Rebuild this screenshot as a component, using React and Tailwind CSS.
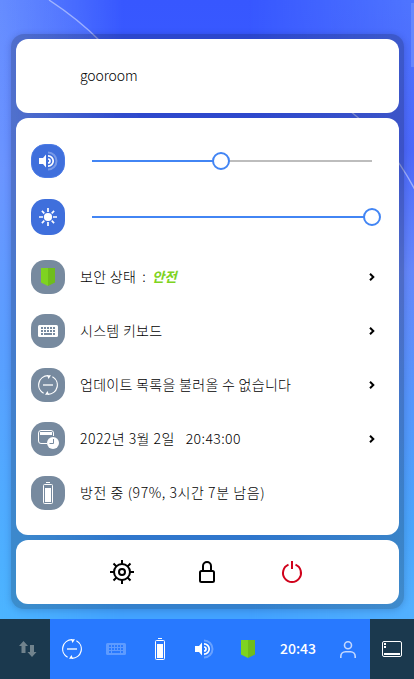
import React from "react";

const FONT = "font-['Noto_Sans_CJK_KR','Noto_Sans',sans-serif]";

function Wallpaper() {
  return (
    <svg className="absolute inset-0" width="414" height="679" viewBox="0 0 414 679" aria-hidden="true">
      <defs>
        <linearGradient id="base" x1="0" y1="0" x2="0" y2="1">
          <stop offset="0" stopColor="#3757ff" />
          <stop offset="0.2" stopColor="#3a5cff" />
          <stop offset="0.8" stopColor="#3b95ff" />
          <stop offset="0.9" stopColor="#42a2ff" />
        </linearGradient>
        <linearGradient id="left" x1="0" y1="0" x2="0" y2="1">
          <stop offset="0" stopColor="#6189ff" />
          <stop offset="0.25" stopColor="#6c96ff" />
          <stop offset="0.5" stopColor="#5b9fff" />
          <stop offset="0.75" stopColor="#50acff" />
          <stop offset="0.9" stopColor="#4cb4ff" />
        </linearGradient>
        <linearGradient id="right" x1="0" y1="0" x2="0" y2="1">
          <stop offset="0" stopColor="#4f75ff" />
          <stop offset="0.22" stopColor="#4c68fa" />
          <stop offset="0.4" stopColor="#6688fb" />
          <stop offset="0.6" stopColor="#5597fc" />
          <stop offset="0.78" stopColor="#4aa5fb" />
          <stop offset="0.9" stopColor="#52b0ff" />
        </linearGradient>
        <linearGradient id="corner" x1="0" y1="0" x2="0" y2="1">
          <stop offset="0" stopColor="#7fa0ff" stopOpacity="0.16" />
          <stop offset="0.3" stopColor="#7fa0ff" stopOpacity="0.16" />
          <stop offset="1" stopColor="#7fa0ff" stopOpacity="0" />
        </linearGradient>
        <linearGradient id="fadeL">
          <stop offset="0" stopColor="#fff" />
          <stop offset="0.3" stopColor="#000" />
        </linearGradient>
        <linearGradient id="fadeR">
          <stop offset="0.6" stopColor="#000" />
          <stop offset="1" stopColor="#fff" />
        </linearGradient>
        <mask id="mL"><rect width="414" height="679" fill="url(#fadeL)" /></mask>
        <mask id="mR"><rect width="414" height="679" fill="url(#fadeR)" /></mask>
      </defs>
      <rect width="414" height="679" fill="url(#base)" />
      <rect width="414" height="679" fill="url(#left)" mask="url(#mL)" />
      <rect width="414" height="679" fill="url(#right)" mask="url(#mR)" />
      <path d="M0 0H49Q78 19 100 41L150 140H0z" fill="url(#corner)" />
      <path d="M49 0Q78 19 100 41" fill="none" stroke="#fff" strokeOpacity="0.45" strokeWidth="1.4" />
      <path d="M350 111Q390 142 415 190" fill="none" stroke="#fff" strokeOpacity="0.45" strokeWidth="1.4" />
      <rect x="411" y="3" width="3" height="64" fill="#6f92ff" fillOpacity="0.7" />
    </svg>
  );
}

function Speaker() {
  return (
    <svg width="20" height="20" viewBox="0 0 20 20" fill="none">
      <path d="M1 7h4l3-3.5v13L5 13H1z" fill="#fff" />
      <path d="M10 1.5a8.5 8.5 0 0 1 0 17" stroke="#fff" strokeOpacity="0.3" strokeWidth="2" />
      <path d="M10 4.8a5.2 5.2 0 0 1 0 10.4M10 8a2 2 0 0 1 0 4" stroke="#fff" strokeWidth="1.7" />
    </svg>
  );
}

function Sun() {
  return (
    <svg width="20" height="20" viewBox="0 0 20 20">
      <circle cx="10" cy="10" r="4.1" fill="#fff" />
      <path d="M10 1v4M10 15v4M1 10h4M15 10h4M3.9 3.9l2.4 2.4M13.7 13.7l2.4 2.4M3.9 16.1l2.4-2.4M13.7 6.3l2.4-2.4" stroke="#fff" strokeWidth="1.7" />
    </svg>
  );
}

function Shield() {
  return (
    <svg width="14" height="18" viewBox="0 0 14 18">
      <path d="M0 0h7v18l-7-3.5z" fill="#7ed321" />
      <path d="M7 0h7v14.5L7 18z" fill="#6fbd1c" />
    </svg>
  );
}

function Keyboard({ hole }) {
  const cells = [];
  for (const y of [2, 5]) for (const x of [3, 6, 9, 12, 15]) cells.push([x, y, 2]);
  cells.push([3, 8, 2], [6, 8, 8], [15, 8, 2]);
  return (
    <svg width="20" height="12" viewBox="0 0 20 12">
      <rect width="20" height="12" rx="1.5" fill="#fff" />
      {cells.map(([x, y, w]) => (
        <rect key={x + "-" + y} x={x} y={y} width={w} height="2" fill={hole} />
      ))}
    </svg>
  );
}

function Update() {
  return (
    <svg width="20" height="20" viewBox="0 0 20 20" fill="none">
      <path d="M5.6 18.2A9.3 9.3 0 0 1 10 .7M14.4 1.8A9.3 9.3 0 0 1 10 19.3" stroke="#fff" strokeWidth="1.2" />
      <path d="M9 .2h4L10.500 4zM11 19.800H7L9.500 16z" fill="#fff" />
      <path d="M5 10h10" stroke="#fff" strokeWidth="1.3" />
    </svg>
  );
}

function CalendarClock() {
  return (
    <svg className="overflow-visible" width="20" height="18" viewBox="0 0 20 18" fill="none">
      <path d="M9 13.5H3A2.500 2.500 0 0 1 .5 11V3A2.500 2.500 0 0 1 3 .5h10A2.500 2.500 0 0 1 15.500 3v3" stroke="#fff" />
      <path d="M2 2h12v3H2z" fill="#fff" />
      <circle cx="15" cy="13" r="6" fill="#fff" />
      <path d="M15.500 9v4.500H11.500" stroke="#778a9f" />
    </svg>
  );
}

function Battery() {
  return (
    <svg width="10" height="22" viewBox="0 0 10 22" fill="none">
      <path d="M3 .5h4" stroke="#fff" />
      <rect x=".5" y="2.5" width="9" height="19" rx="1" stroke="#fff" />
      <path d="M2 6h6v14H2z" fill="#fff" />
    </svg>
  );
}

function Chevron() {
  return (
    <svg width="6" height="8" viewBox="0 0 6 8" fill="none">
      <path d="M1 .8L4.300 4 1 7.200" stroke="#000" strokeWidth="2" />
    </svg>
  );
}

function Gear() {
  return (
    <svg width="24" height="24" viewBox="0 0 24 24" fill="none" stroke="#000" strokeWidth="2">
      <circle cx="12" cy="12" r="8" />
      <circle cx="12" cy="12" r="3" />
      <path d="M12 0v4M12 20v4M0 12h4M20 12h4M3.500 3.500l3 3M17.500 17.500l3 3M3.500 20.500l3-3M17.500 6.500l3-3" />
    </svg>
  );
}

function Lock() {
  return (
    <svg width="16" height="22" viewBox="0 0 16 22" fill="none" stroke="#000" strokeWidth="2">
      <path d="M4 10V5a4 4 0 0 1 8 0v5" />
      <rect x="1" y="10" width="14" height="11" rx="1.5" />
    </svg>
  );
}

function Power() {
  return (
    <svg width="22" height="22" viewBox="0 0 22 22" fill="none" stroke="#d0021b" strokeWidth="2">
      <path d="M7.500 3.700a9 9 0 1 0 7 0M11 0v8" />
    </svg>
  );
}

function Arrows() {
  return (
    <svg width="18" height="16" viewBox="0 0 18 16" fill="#71838d">
      <path d="M4.500 0L9 5H6.500v7h-4V5H0z" />
      <path d="M13 16l-4.500-5H11V4h4v7h2.500z" />
    </svg>
  );
}

function Person() {
  return (
    <svg width="16" height="17" viewBox="0 0 16 17" fill="none" stroke="#c4d8ff" strokeWidth="1.6">
      <circle cx="8" cy="4.3" r="3.5" />
      <path d="M.8 17v-1.500a4.700 4.700 0 0 1 4.700-4.700h5a4.700 4.700 0 0 1 4.700 4.700V17" />
    </svg>
  );
}

function Desktop() {
  return (
    <svg width="20" height="16" viewBox="0 0 20 16" fill="none">
      <rect x=".5" y=".5" width="19" height="15" rx="1.5" stroke="#fff" />
      <path d="M2 2h2v2H2zM2 5h2v2H2zM2 12h16v2H2z" fill="#fff" />
    </svg>
  );
}

function Badge({ tone = "h-[34px] bg-[#778a9f]", children }) {
  return (
    <div className={"flex w-[34px] shrink-0 items-center justify-center rounded-[14px] " + tone}>
      {children}
    </div>
  );
}

function Slider({ value }) {
  return (
    <div className="relative ml-[27px] h-0.5 w-[280px] bg-[#bdbdbd]">
      <div className="h-full bg-[#4285f4]" style={{ width: value + "%" }} />
      <div className="absolute top-[-8px] h-[18px] w-[18px] -translate-x-1/2 rounded-full border-2 border-[#4285f4] bg-white" style={{ left: value + "%" }} />
    </div>
  );
}

function Row({ icon, arrow, children }) {
  return (
    <div className="flex h-[54px] items-center pr-6">
      <Badge>{icon}</Badge>
      <div className="ml-[15px] flex flex-1 whitespace-pre pb-0.5">{children}</div>
      {arrow && <Chevron />}
    </div>
  );
}

export default function App() {
  return (
    <div className={"relative h-[679px] w-[414px] overflow-hidden text-sm font-light leading-5 text-black " + FONT}>
      <Wallpaper />
      <div className="relative flex h-full flex-col pt-[34px]">
        <main className="ml-[11px] flex h-[575px] w-[393px] flex-col gap-[5px] rounded-[13px] bg-black/20 p-[5px] shadow-[0_1px_7px_rgba(0,0,40,0.18)]">
          <section className="flex h-[74px] items-center rounded-xl bg-white pb-0.5 pl-16">
            <span className="tracking-[-0.1px]">gooroom</span>
          </section>
          <section className="h-[417px] rounded-xl bg-white pl-[15px] pt-[26px]">
            <div className="flex h-[34px] items-center">
              <Badge tone="h-[34px] border border-[#4a7ae6] bg-[#3f6fdc]"><Speaker /></Badge>
              <Slider value={46} />
            </div>
            <div className="mt-[21px] flex h-9 items-center">
              <Badge tone="h-9 bg-[#3f6fdc]"><Sun /></Badge>
              <Slider value={100} />
            </div>
            <div className="mt-[15px] tracking-[0.3px]">
              <Row icon={<Shield />} arrow>
                <span>보안 상태</span>
                <span className="ml-1.5">:</span>
                <span className="ml-1.5 text-[13.5px] font-bold italic tracking-normal text-[#7ed321]">안전</span>
              </Row>
              <Row icon={<Keyboard hole="#778a9f" />} arrow><span>시스템 키보드</span></Row>
              <Row icon={<Update />} arrow><span>업데이트 목록을 불러올 수 없습니다</span></Row>
              <Row icon={<CalendarClock />} arrow>
                <span className="tracking-[0.45px]">2022년 3월 2일</span>
                <span className="ml-[11px] tracking-[0.4px]">20:43:00</span>
              </Row>
              <Row icon={<Battery />}><span className="tracking-[0.56px]">방전 중 (97%, 3시간 7분 남음)</span></Row>
            </div>
          </section>
          <section className="flex h-16 items-center rounded-xl bg-white pl-[94px]">
            <Gear />
            <div className="ml-[65px]"><Lock /></div>
            <div className="ml-[66px]"><Power /></div>
          </section>
        </main>
        <footer className="mt-2.5 flex h-[60px] items-center bg-[#2879ff]">
          <div className="flex h-full w-[50px] items-center bg-[#1b394e] pl-[19px]"><Arrows /></div>
          <div className="flex h-full w-[320px] items-center">
            <div className="flex w-11 justify-center"><Update /></div>
            <div className="flex w-11 justify-center opacity-25"><Keyboard hole="#2879ff" /></div>
            <div className="flex w-11 justify-center"><Battery /></div>
            <div className="flex w-11 justify-center"><Speaker /></div>
            <div className="flex w-11 justify-center"><Shield /></div>
            <div className="flex w-14 justify-center pb-0.5 font-medium text-white">20:43</div>
            <div className="flex w-11 justify-center"><Person /></div>
          </div>
          <div className="flex h-full w-11 items-center justify-center bg-[#1b394e]"><Desktop /></div>
        </footer>
      </div>
    </div>
  );
}
